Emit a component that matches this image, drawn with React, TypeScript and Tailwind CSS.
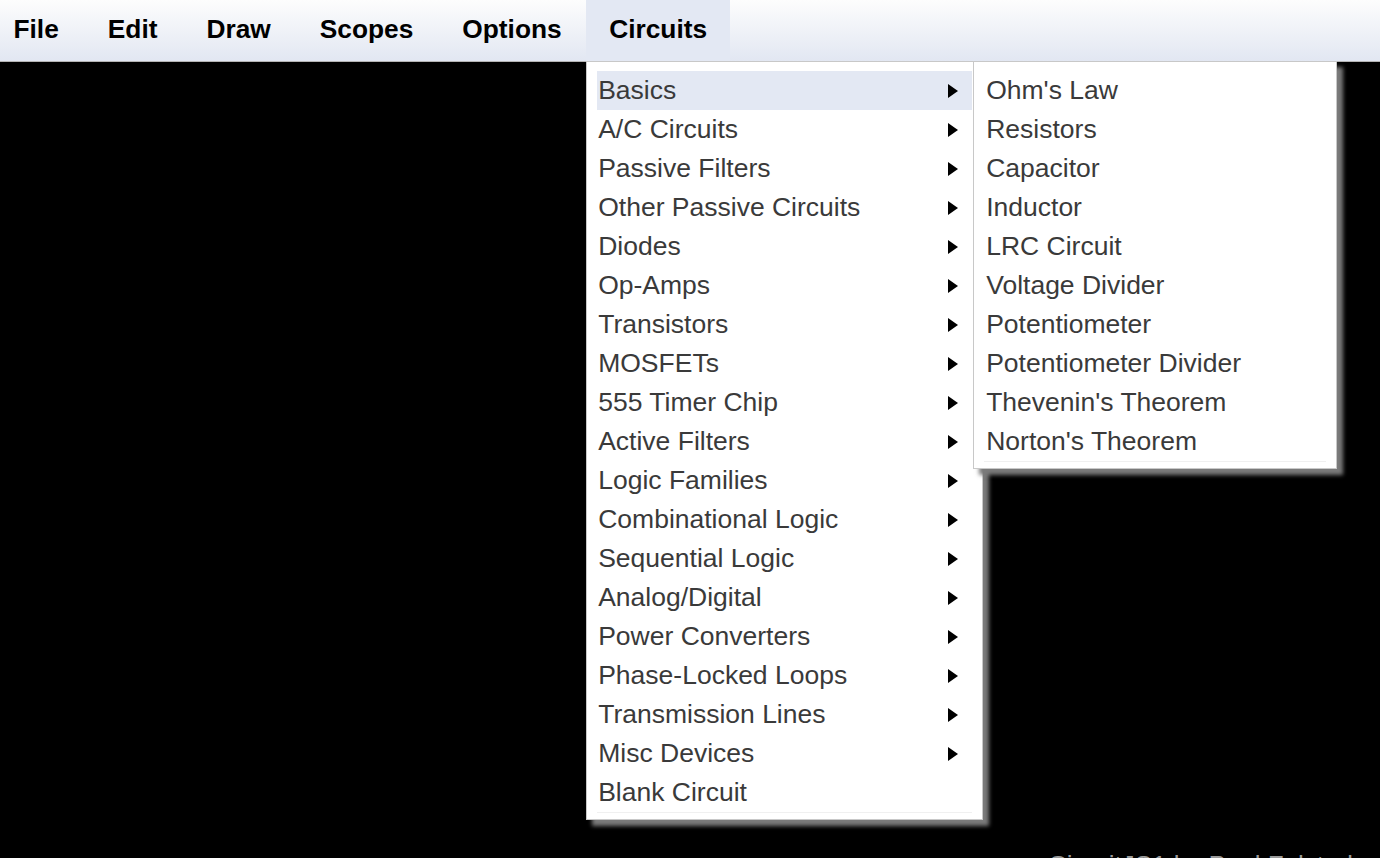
import React from 'react';

const barItems = ['File', 'Edit', 'Draw', 'Scopes', 'Options', 'Circuits'];

const circuitGroups = [
  'Basics',
  'A/C Circuits',
  'Passive Filters',
  'Other Passive Circuits',
  'Diodes',
  'Op-Amps',
  'Transistors',
  'MOSFETs',
  '555 Timer Chip',
  'Active Filters',
  'Logic Families',
  'Combinational Logic',
  'Sequential Logic',
  'Analog/Digital',
  'Power Converters',
  'Phase-Locked Loops',
  'Transmission Lines',
  'Misc Devices',
];

const basics = [
  "Ohm's Law",
  'Resistors',
  'Capacitor',
  'Inductor',
  'LRC Circuit',
  'Voltage Divider',
  'Potentiometer',
  'Potentiometer Divider',
  "Thevenin's Theorem",
  "Norton's Theorem",
];

function Arrow() {
  return (
    <svg width="10" height="14" viewBox="0 0 10 14" className="shrink-0">
      <polygon points="0,0 10,7 0,14" fill="#000" />
    </svg>
  );
}

function MenuItem({ label, sub, active }: { label: string; sub?: boolean; active?: boolean }) {
  return (
    <div
      className={`flex h-[39px] items-center justify-between pl-[1px] pr-[14px] ${
        active ? 'bg-[#e3e8f3]' : ''
      }`}
    >
      <span>{label}</span>
      {sub && <Arrow />}
    </div>
  );
}

export default function App() {
  return (
    <div
      className="relative h-[858px] w-full overflow-hidden bg-black"
      style={{ fontFamily: '"Liberation Sans", Arial, sans-serif' }}
    >
      {/* menu bar */}
      <div className="flex h-[62px] items-stretch border-b border-[#b4b4b4] bg-gradient-to-b from-[#fdfdfd] to-[#e2e7f2]">
        <div className="ml-[-11px] flex items-stretch">
          {barItems.map((item) => (
            <div
              key={item}
              className={`relative flex items-center pb-[2px] text-[26.3px] font-bold text-black ${
                item === 'Circuits' ? 'bg-[#e3e8f3] px-[23px]' : 'px-[24.5px]'
              }`}
            >
              {item}
              {item === 'Circuits' && (
                <div className="absolute left-0 top-[61px] z-10 w-[397px] border border-[#c8c8c8] bg-white px-[10px] pb-[6px] pt-[9px] text-[26.5px] font-normal text-[#3a3a3a] shadow-[6px_6px_4px_#7a7a7a]">
                  {circuitGroups.map((g) => (
                    <MenuItem key={g} label={g} sub active={g === 'Basics'} />
                  ))}
                  <div className="border-b border-[#f0f0f0]">
                    <MenuItem label="Blank Circuit" />
                  </div>

                  <div className="absolute left-[386px] top-[-1px] w-[364px] border border-[#c8c8c8] bg-white px-[10px] pb-[6px] pt-[9px] shadow-[6px_6px_4px_#7a7a7a]">
                    <div className="border-b border-[#f0f0f0]">
                      {basics.map((b) => (
                        <div key={b} className="flex h-[39px] items-center pl-[2px]">
                          {b}
                        </div>
                      ))}
                    </div>
                  </div>
                </div>
              )}
            </div>
          ))}
        </div>
      </div>

      {/* status text, mostly cut off at the bottom edge */}
      <div className="absolute left-[1048px] top-[846px] whitespace-nowrap text-[26px] text-[#9a9a9a]">
        CircuitJS1 by Paul Falstad
      </div>
    </div>
  );
}
